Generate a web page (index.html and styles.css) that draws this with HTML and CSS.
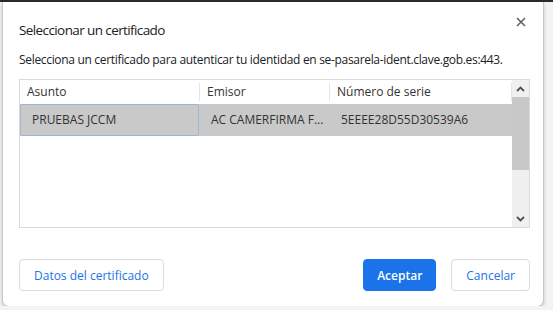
FILE: index.html
```html
<!DOCTYPE html>
<html>
<head>
    <title>Seleccionar un certificado</title>
    <link rel="stylesheet" href="styles.css">
</head>
<body>
    <div class="topbar"></div>
    <div class="dialog">
        <button class="close" aria-label="Cerrar">
            <svg width="10" height="10" viewBox="0 0 10 10"><path d="M1 1L9 9M9 1L1 9" stroke="#5f6368" stroke-width="1.6"/></svg>
        </button>
        <h1>Seleccionar un certificado</h1>
        <p class="subtitle">Selecciona un certificado para autenticar tu identidad en se-pasarela-ident.clave.gob.es:443.</p>

        <div class="table-box">
            <div class="table">
                <div class="row head">
                    <div class="cell c1">Asunto</div>
                    <div class="cell c2">Emisor</div>
                    <div class="cell c3">Número de serie</div>
                </div>
                <div class="row selected">
                    <div class="cell c1 focus">PRUEBAS JCCM</div>
                    <div class="cell c2">AC CAMERFIRMA F...</div>
                    <div class="cell c3">5EEEE28D55D30539A6</div>
                </div>
            </div>
            <div class="scrollbar">
                <div class="arrow">
                    <svg width="9" height="6" viewBox="0 0 9 6"><path d="M1 5L4.5 1.5L8 5" fill="none" stroke="#505050" stroke-width="1.8"/></svg>
                </div>
                <div class="thumb"></div>
                <div class="track"></div>
                <div class="arrow">
                    <svg width="9" height="6" viewBox="0 0 9 6"><path d="M1 1L4.5 4.5L8 1" fill="none" stroke="#505050" stroke-width="1.8"/></svg>
                </div>
            </div>
        </div>

        <div class="actions">
            <button class="btn">Datos del certificado</button>
            <div class="right">
                <button class="btn primary">Aceptar</button>
                <button class="btn">Cancelar</button>
            </div>
        </div>
    </div>
</body>
</html>
```

FILE: styles.css
```css
body { margin: 0; background: #f3f3f3; font-family: "Open Sans", "Noto Sans", sans-serif; color: #202124; }
.topbar { height: 2px; background: #2b2b2b; }
.dialog {
    position: relative;
    margin-left: 3px;
    width: 524px;
    height: 304px;
    padding: 0 0 0 16px;
    background: #fff;
    border-radius: 0 0 6px 6px;
    box-shadow: -1px 0 0 #c8c8c8, 1px 0 0 #c8c8c8, 0 2px 4px rgba(0,0,0,0.3);
}
.close {
    position: absolute;
    top: 11px;
    right: 15px;
    width: 14px;
    height: 14px;
    padding: 2px;
    border: none;
    background: none;
}
h1 {
    margin: 0;
    padding-top: 18px;
    font-size: 13.5px;
    letter-spacing: -0.6px;
    font-weight: 400;
    line-height: 20px;
    color: #202124;
}
.subtitle {
    margin: 12px 0 0;
    font-size: 12px;
    letter-spacing: -0.32px;
    line-height: 16px;
    color: #202124;
}
.table-box {
    display: flex;
    margin-top: 11px;
    width: 509px;
    height: 147px;
    border: 1px solid #dadada;
}
.table { flex: 1; }
.row { display: flex; }
.head { height: 23px; align-items: center; font-size: 12px; color: #333; }
.head .cell { border-right: 1px solid #e5e5e5; height: 18px; line-height: 18px; padding-left: 7px; }
.head .c1 { width: 172px; }
.head .c2 { width: 122px; }
.head .c3 { width: 174px; }
.selected { height: 32px; margin-top: 1px; background: #c9c9c9; font-size: 12px; color: #333; }
.selected .cell { line-height: 32px; }
.selected .c2 { width: 118px; padding-left: 12px; }
.selected .c3 { padding-left: 12px; }
.focus { border: 1px solid #9cb7d8; border-radius: 2px; line-height: 30px !important; height: 30px; width: 166px; padding-left: 11px; }
.scrollbar { width: 17px; display: flex; flex-direction: column; background: #f0f0f0; }
.arrow { height: 17px; display: flex; align-items: center; justify-content: center; }
.thumb { height: 73px; background: #c8c8c8; }
.track { flex: 1; }
.actions {
    display: flex;
    justify-content: space-between;
    margin-top: 31px;
    width: 511px;
}
.right { display: flex; gap: 15px; }
.btn {
    height: 32px;
    padding: 0 14px;
    font-family: "Open Sans", "Noto Sans", sans-serif;
    font-size: 12px;
    font-weight: 400;
    color: #1a73e8;
    background: #fff;
    border: 1px solid #dadce0;
    border-radius: 4px;
}
.primary { background: #1a73e8; border-color: #1a73e8; color: #fff; font-weight: 600; padding: 0 13px; }
```
